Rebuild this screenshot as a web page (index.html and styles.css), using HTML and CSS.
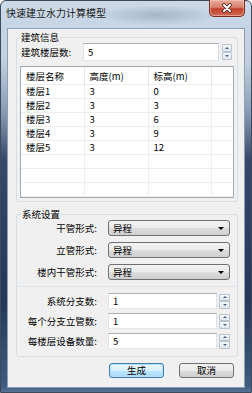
FILE: index.html
```html
<!DOCTYPE html>
<html lang="zh-CN">
<head>
  <meta charset="UTF-8" />
  <meta name="viewport" content="width=device-width, initial-scale=1.0"/>
  <title>快速建立水力计算模型</title>
  <link rel="stylesheet" href="styles.css">
</head>
<body>
  <div class="window">
    <div class="titlebar">
      <span class="title">快速建立水力计算模型</span>
      <button class="close-btn" title="关闭">
        <svg width="14" height="10" viewBox="0 0 14 10">
          <path d="M4 2 L10 8 M10 2 L4 8" stroke="#4a2a22" stroke-width="3.6" stroke-linecap="round"/>
          <path d="M4 2 L10 8 M10 2 L4 8" stroke="#fff" stroke-width="2" stroke-linecap="round"/>
        </svg>
      </button>
    </div>

    <div class="client">
      <fieldset class="group group-build">
        <legend>建筑信息</legend>
        <div class="floor-row">
          <label class="floor-label">建筑楼层数:</label>
          <input class="text-box floor-input" value="5">
          <div class="spin spin-tall"><span class="spin-btn up"></span><span class="spin-btn down"></span></div>
        </div>
        <div class="list">
          <table>
            <colgroup>
              <col class="col-name"><col class="col-height"><col class="col-level"><col>
            </colgroup>
            <thead>
              <tr><th>楼层名称</th><th>高度(m)</th><th>标高(m)</th><th></th></tr>
            </thead>
            <tbody>
              <tr><td>楼层1</td><td>3</td><td>0</td><td></td></tr>
              <tr><td>楼层2</td><td>3</td><td>3</td><td></td></tr>
              <tr><td>楼层3</td><td>3</td><td>6</td><td></td></tr>
              <tr><td>楼层4</td><td>3</td><td>9</td><td></td></tr>
              <tr><td>楼层5</td><td>3</td><td>12</td><td></td></tr>
              <tr><td></td><td></td><td></td><td></td></tr>
              <tr><td></td><td></td><td></td><td></td></tr>
              <tr><td></td><td></td><td></td><td></td></tr>
            </tbody>
          </table>
        </div>
      </fieldset>

      <fieldset class="group group-system">
        <legend>系统设置</legend>
        <div class="form-grid combo-grid">
          <label class="form-label">干管形式:</label>
          <div class="combo"><span>异程</span><span class="combo-arrow"></span></div>
          <label class="form-label">立管形式:</label>
          <div class="combo"><span>异程</span><span class="combo-arrow"></span></div>
          <label class="form-label">楼内干管形式:</label>
          <div class="combo"><span>异程</span><span class="combo-arrow"></span></div>
        </div>

        <div class="separator"></div>

        <div class="form-grid spin-grid">
          <label class="form-label">系统分支数:</label>
          <div class="spin-field">
            <input class="text-box" value="1">
            <div class="spin"><span class="spin-btn up"></span><span class="spin-btn down"></span></div>
          </div>
          <label class="form-label">每个分支立管数:</label>
          <div class="spin-field">
            <input class="text-box" value="1">
            <div class="spin"><span class="spin-btn up"></span><span class="spin-btn down"></span></div>
          </div>
          <label class="form-label">每楼层设备数量:</label>
          <div class="spin-field">
            <input class="text-box" value="5">
            <div class="spin"><span class="spin-btn up"></span><span class="spin-btn down"></span></div>
          </div>
        </div>
      </fieldset>

      <div class="actions">
        <button class="btn btn-default">生成</button>
        <button class="btn">取消</button>
      </div>
    </div>
  </div>
</body>
</html>
```

FILE: styles.css
```css
body {
  margin: 0;
  font-family: "Noto Sans CJK SC", "Noto Sans", sans-serif;
  font-size: 9.5px;
  color: #000;
}

.window {
  width: 252px;
  height: 393px;
  box-sizing: border-box;
  display: flex;
  flex-direction: column;
  padding: 0 6px 4px 6px;
  border: 1px solid #3d4a5b;
  border-radius: 6px 6px 0 0;
  background: linear-gradient(to bottom, #cbd9e8 0px, #c0d0e1 60px, #8a9db4 110px, #33486a 160px, #24385a 300px, #3f5b80 385px, #5a769a 392px);
}

.titlebar {
  height: 27px;
  display: flex;
  justify-content: space-between;
  align-items: flex-start;
  background: radial-gradient(ellipse 60px 10px at 150px 14px, rgba(120, 140, 165, 0.45), rgba(120, 140, 165, 0) 100%);
}

.title {
  margin: 5px 0 0 -1px;
  font-size: 10px;
  line-height: 14px;
  color: #1b1b1b;
}

.close-btn {
  width: 36px;
  height: 17px;
  margin: -1px 0 0 0;
  padding: 0;
  display: flex;
  align-items: center;
  justify-content: center;
  border: 1px solid #7a2a1e;
  border-top: none;
  border-radius: 0 0 5px 5px;
  background: linear-gradient(to bottom, #e9a99a 0%, #d8826f 45%, #c2402b 55%, #d06a55 100%);
  box-shadow: inset 0 0 0 1px rgba(255, 210, 200, 0.5);
}

.client {
  flex: 1;
  display: flex;
  flex-direction: column;
  background: #f0f0f0;
  border: 1px solid #8e9fb4;
}

.group {
  width: 222px;
  box-sizing: border-box;
  min-width: 0;
  margin: 0 0 0 8px;
  padding: 0 4px 3px 3px;
  border: 1px solid #d5dfe5;
  border-radius: 3px;
}

.group legend {
  padding: 0 1px;
  line-height: 12px;
}

.group-build {
  margin-top: 2px;
}

.group-system {
  margin-top: 6px;
  padding-bottom: 7px;
}

.group-system legend {
  margin-left: 1px;
}

.floor-row {
  display: flex;
  align-items: center;
  height: 18px;
}

.floor-label {
  width: 63px;
  padding-left: 1px;
  box-sizing: border-box;
}

.text-box {
  box-sizing: border-box;
  height: 16px;
  padding: 0 4px;
  font-family: inherit;
  font-size: 9.5px;
  border: 1px solid;
  border-color: #abadb3 #dbdfe6 #e3e9ef #e2e3ea;
  background: #fff;
  outline: none;
}

.floor-input {
  width: 136px;
  height: 18px;
}

.spin {
  width: 11px;
  height: 15px;
  display: flex;
  flex-direction: column;
  justify-content: space-between;
}

.spin-tall {
  width: 10px;
  height: 16px;
  margin-left: 3px;
}

.spin-btn {
  height: 6px;
  display: flex;
  align-items: center;
  justify-content: center;
  border: 1px solid #b8c3d0;
  border-radius: 1px;
  background: linear-gradient(to bottom, #f7f9fb, #dfe5ec);
}

.spin-btn::after {
  content: "";
  border-left: 2px solid transparent;
  border-right: 2px solid transparent;
}

.spin-btn.up::after {
  border-bottom: 2px solid #4b6188;
}

.spin-btn.down::after {
  border-top: 2px solid #4b6188;
}

.list {
  margin-top: 5px;
  width: 212px;
  border: 1px solid #a3a9b1;
  background: #fff;
}

.list table {
  width: 100%;
  border-collapse: collapse;
  table-layout: fixed;
}

.col-name { width: 63px; }
.col-height { width: 64px; }
.col-level { width: 63px; }

.list th {
  height: 17px;
  padding: 0 0 0 5px;
  font-weight: normal;
  text-align: left;
  border-right: 1px solid #e5e5e5;
  border-bottom: 1px solid #eeeeee;
}

.list td {
  height: 13px;
  padding: 0 0 0 5px;
  line-height: 13px;
  border-right: 1px solid #eeeeee;
  border-bottom: 1px solid #eeeeee;
}

.list th:last-child,
.list td:last-child {
  border-right: none;
}

.form-grid {
  display: grid;
  grid-template-columns: 77px 122px;
  column-gap: 11px;
  align-items: center;
}

.combo-grid {
  row-gap: 6px;
}

.spin-grid {
  margin-top: 6px;
  row-gap: 4px;
}

.form-label {
  text-align: right;
  white-space: nowrap;
}

.combo {
  height: 16px;
  box-sizing: border-box;
  display: flex;
  align-items: center;
  justify-content: space-between;
  padding: 0 5px 0 4px;
  border: 1px solid #707070;
  border-radius: 3px;
  background: linear-gradient(to bottom, #f2f2f2 0%, #ebebeb 50%, #dddddd 51%, #cfcfcf 100%);
}

.combo-arrow {
  border-left: 3px solid transparent;
  border-right: 3px solid transparent;
  border-top: 3px solid #000;
}

.separator {
  height: 1px;
  margin: 6px -4px 0 -3px;
  background: #dfe5ea;
}

.spin-field {
  display: flex;
  align-items: center;
  gap: 2px;
}

.spin-field .text-box {
  width: 109px;
}

.actions {
  display: flex;
  justify-content: flex-end;
  gap: 15px;
  margin: 6px 10px 0 0;
}

.btn {
  width: 55px;
  height: 15px;
  padding: 0;
  font-family: inherit;
  font-size: 9.5px;
  line-height: 13px;
  border: 1px solid #707070;
  border-radius: 3px;
  background: linear-gradient(to bottom, #f2f2f2 0%, #ebebeb 50%, #dddddd 51%, #cfcfcf 100%);
}

.btn-default {
  border-color: #3c7fb1;
  box-shadow: inset 0 0 0 1px #b6e0f5;
  background: linear-gradient(to bottom, #eaf6fd 0%, #d9f0fc 50%, #bee6fd 51%, #a7d9f5 100%);
}
```
